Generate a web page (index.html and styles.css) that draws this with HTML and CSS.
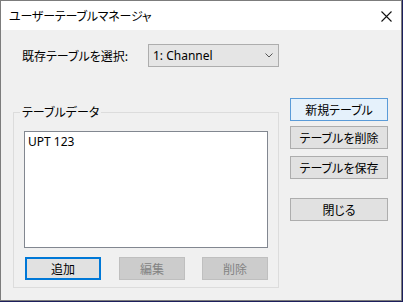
FILE: index.html
```html
<!DOCTYPE html>
<html lang="ja">
<head>
  <meta charset="UTF-8" />
  <title>ユーザーテーブルマネージャ</title>
  <link rel="stylesheet" href="styles.css">
</head>
<body>
  <div class="window">
    <div class="titlebar">
      <span class="title">ユーザーテーブルマネージャ</span>
      <span class="close">
        <svg width="11" height="11" viewBox="0 0 11 11">
          <path d="M0.5 0.5 L10.5 10.5 M10.5 0.5 L0.5 10.5" stroke="#111" stroke-width="1.1" fill="none"/>
        </svg>
      </span>
    </div>

    <div class="content">
      <div class="left">
        <div class="picker">
          <span class="picker-label">既存テーブルを選択:</span>
          <div class="combo">
            <span>1: Channel</span>
            <svg width="8" height="5" viewBox="0 0 8 5">
              <path d="M0.5 0.5 L4 4 L7.5 0.5" stroke="#555" stroke-width="1" fill="none"/>
            </svg>
          </div>
        </div>

        <fieldset class="group">
          <legend>テーブルデータ</legend>
          <div class="listbox">
            <div class="item">UPT 123</div>
          </div>
          <div class="list-actions">
            <button class="btn focused btn-add">追加</button>
            <button class="btn disabled btn-small" disabled>編集</button>
            <button class="btn disabled btn-small" disabled>削除</button>
          </div>
        </fieldset>
      </div>

      <div class="right">
        <button class="btn hover new-btn">新規テーブル</button>
        <button class="btn del-btn">テーブルを削除</button>
        <button class="btn save-btn">テーブルを保存</button>
        <button class="btn close-btn">閉じる</button>
      </div>
    </div>
  </div>
</body>
</html>
```

FILE: styles.css
```css
body {
  margin: 0;
  background: #1c1f5c;
  font-family: "Noto Sans CJK JP", "Noto Sans", sans-serif;
  font-size: 12px;
  color: #000;
}

.window {
  width: 402px;
  height: 301px;
  box-sizing: border-box;
  border: 1px solid #7c7c7c;
  background: #f0f0f0;
}

.titlebar {
  height: 29px;
  background: #fff;
  display: flex;
  align-items: center;
  justify-content: space-between;
  padding: 0 8px 0 8px;
}

.title {
  font-feature-settings: "palt";
  letter-spacing: -0.2px;
  line-height: 1;
}

.close {
  display: flex;
  margin-right: 1px;
  margin-top: 1px;
}

.content {
  display: flex;
  padding: 14px 0 0 12px;
}

.left {
  width: 266px;
}

.picker {
  display: flex;
  align-items: center;
  height: 23px;
}

.picker-label {
  padding-left: 9px;
  width: 126px;
  font-feature-settings: "palt";
}

.combo {
  box-sizing: border-box;
  width: 131px;
  height: 23px;
  border: 1px solid #adadad;
  background: #e5e5e5;
  display: flex;
  align-items: center;
  justify-content: space-between;
  padding: 0 5px 0 4px;
  font-family: "Noto Sans", sans-serif;
}

.group {
  margin: 38px 0 0 0;
  padding: 12px 10px 7px 10px;
  border: 1px solid #dcdcdc;
  min-width: 0;
}

.group legend {
  padding: 0 2px;
  margin-left: -4px;
  font-feature-settings: "palt";
  line-height: 14px;
}

.listbox {
  box-sizing: border-box;
  width: 244px;
  height: 117px;
  border: 1px solid #828790;
  background: #fff;
  padding: 2px 3px;
}

.item {
  font-family: "Noto Sans", sans-serif;
  line-height: 16px;
}

.list-actions {
  display: flex;
  margin-top: 9px;
}

.btn {
  box-sizing: border-box;
  height: 23px;
  border: 1px solid #adadad;
  background: #e1e1e1;
  font-family: inherit;
  font-size: 12px;
  color: #000;
  padding: 0;
  font-feature-settings: "palt";
  line-height: 1;
}

.btn.focused {
  border: 2px solid #0078d7;
}

.btn.disabled {
  background: #cccccc;
  border-color: #bfbfbf;
  color: #838383;
}

.btn.hover {
  background: #e5f1fb;
  border-color: #5a9bd8;
}

.btn-add {
  width: 76px;
  margin-left: 1px;
}

.btn-small {
  width: 66px;
  margin-left: 18px;
}

.btn-small + .btn-small {
  margin-left: 17px;
}

.right {
  display: flex;
  flex-direction: column;
  width: 98px;
  margin-left: 11px;
  padding-top: 54px;
}

.right .btn {
  width: 98px;
}

.del-btn {
  margin-top: 5px;
}

.save-btn {
  margin-top: 7px;
}

.close-btn {
  margin-top: 19px;
}
```
